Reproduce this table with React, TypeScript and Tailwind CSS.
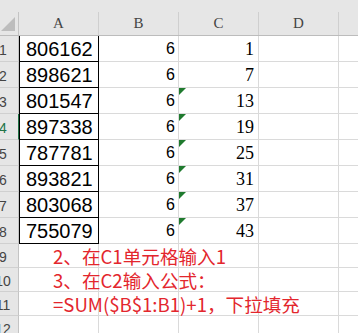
const colA = [806162, 898621, 801547, 897338, 787781, 893821, 803068, 755079];
const colC = [1, 7, 13, 19, 25, 31, 37, 43];

const notes = ["2、在C1单元格输入1", "3、在C2输入公式：", "=SUM($B$1:B1)+1，下拉填充"];

const sans = "font-['Liberation_Sans',Arial,sans-serif]";
const serif = "font-['Liberation_Serif','Times_New_Roman',serif]";

const RowLabel = ({ n, active = false }: { n: number; active?: boolean }) => (
  <div
    className={`w-[19px] h-full shrink-0 overflow-hidden bg-[#e6e6e6] border-b border-[#d0d0d0] border-r ${
      active ? "border-r-[#217346]" : "border-r-[#c4c4c4]"
    }`}
  >
    <div
      className={`w-[30px] -ml-[12px] h-full flex items-center justify-center pt-[3px] text-[14px] ${sans} ${
        active ? "text-[#217346]" : "text-[#444]"
      }`}
    >
      {n}
    </div>
  </div>
);

const GreenFlag = () => (
  <svg width="7" height="7" viewBox="0 0 7 7" className="absolute left-0 top-0">
    <polygon points="0,0 7,0 0,7" fill="#1f7a2e" />
  </svg>
);

const App = () => {
  return (
    <div className="w-[358px] h-[333px] overflow-hidden bg-white relative">
      {/* column headers */}
      <div className="flex h-[36px] bg-[#e6e6e6] border-b border-[#bcbcbc]">
        <div className="w-[19px] shrink-0">
          <svg width="19" height="35" viewBox="0 0 19 35" className="block">
            <polygon points="1,31 15,31 15,17" fill="#bdbdbd" />
            <line x1="18.5" y1="12" x2="18.5" y2="35" stroke="#c4c4c4" />
          </svg>
        </div>
        {["A", "B", "C", "D"].map((c) => (
          <div
            key={c}
            className={`w-[80px] shrink-0 mt-[12px] h-[23px] border-r border-[#cfcfcf] flex items-center justify-center text-[15px] text-[#444] ${serif}`}
          >
            {c}
          </div>
        ))}
        <div className="flex-1" />
      </div>

      {/* data rows */}
      {colA.map((a, i) => (
        <div key={a} className="flex h-[26px]">
          <RowLabel n={i + 1} active={i === 3} />
          <div
            className={`w-[80px] shrink-0 border-l border-r border-b border-black flex items-center pl-[6px] text-[20px] text-black ${sans}`}
          >
            {a}
          </div>
          <div
            className={`w-[80px] shrink-0 border-r border-b border-[#dadada] flex items-end justify-end pr-[3px] pb-[3px] text-[16px] leading-[18px] text-black ${sans}`}
          >
            6
          </div>
          <div
            className={`relative w-[80px] shrink-0 border-r border-b border-[#dadada] flex items-end justify-end pr-[4px] pb-[2px] text-[18px] leading-[20px] text-black ${serif}`}
          >
            {i >= 2 && <GreenFlag />}
            {colC[i]}
          </div>
          <div className="w-[80px] shrink-0 border-r border-b border-[#dadada]" />
          <div className="flex-1 border-b border-[#dadada]" />
        </div>
      ))}

      {/* note rows */}
      {[9, 10, 11, 12].map((n, i) => (
        <div key={n} className="flex h-[24px]">
          <RowLabel n={n} />
          <div className="relative z-10 w-[80px] shrink-0 border-r border-b border-[#dadada] flex items-center pl-[34px] overflow-visible">
            {notes[i] && (
              <span className="whitespace-nowrap text-[18.6px] leading-[24px] text-[#e3262d] font-['Noto_Sans_CJK_SC','Noto_Sans',sans-serif]">
                {notes[i]}
              </span>
            )}
          </div>
          <div className="w-[80px] shrink-0 border-r border-b border-[#dadada]" />
          <div className="w-[80px] shrink-0 border-r border-b border-[#dadada]" />
          <div className="w-[80px] shrink-0 border-r border-b border-[#dadada]" />
          <div className="flex-1 border-b border-[#dadada]" />
        </div>
      ))}
    </div>
  );
};

export default App;
